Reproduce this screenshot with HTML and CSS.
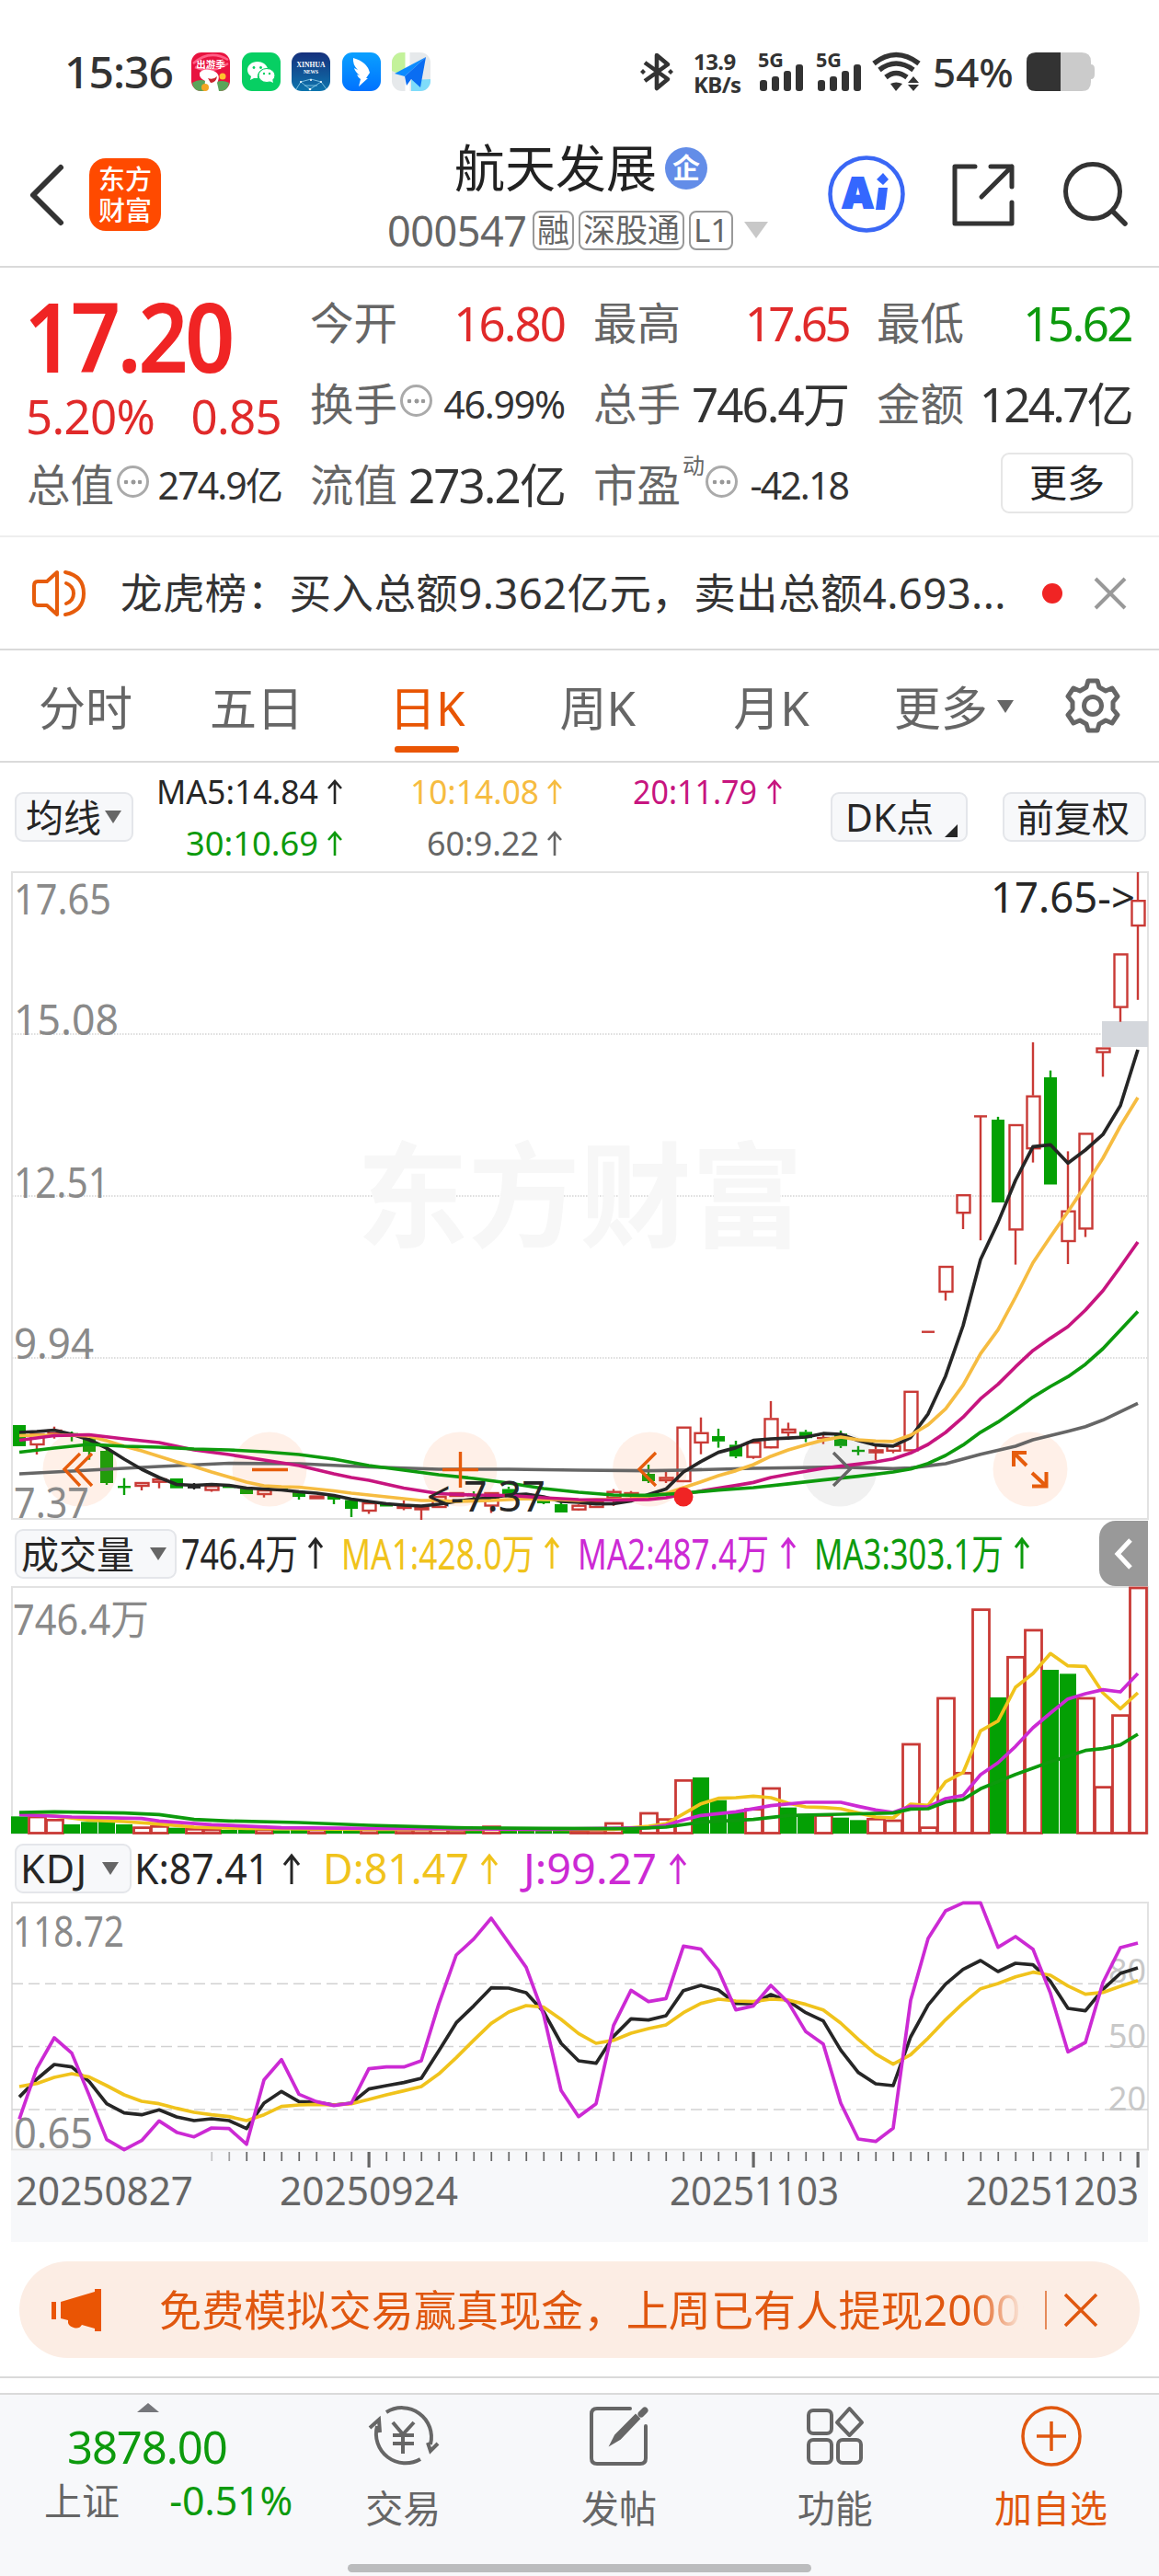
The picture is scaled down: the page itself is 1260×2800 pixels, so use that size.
FILE: index.html
```html
<!DOCTYPE html>
<html lang="zh-CN">
<head>
<meta charset="utf-8">
<title>航天发展 000547</title>
<link rel="stylesheet" href="styles.css">
</head>
<body>
<div class="status">
  <span class="clock">15:36</span>
  <div class="apps">
    <svg viewBox="0 0 42 42"><rect width="42" height="42" rx="11" fill="#e8123f"/><path d="M2 12Q20-4 40 8M4 16Q22 24 40 12" stroke="#ff5f86" stroke-width="2.5" fill="none"/><path d="M1 33Q12 26 21 35Q32 28 41 33Q40 42 31 42H11Q2 42 1 33Z" fill="#5aa55a"/><path d="M9 22Q14 16 24 20Q33 24 28 33L30 42H14L15 31Q8 28 9 22Z" fill="#fff"/><path d="M18 28Q24 30 28 26Q27 33 21 33Z" fill="#c8232c"/><circle cx="34" cy="26" r="3.5" fill="#ffc22e"/><circle cx="15" cy="38" r="4" fill="#f5a623"/><text x="21" y="17" text-anchor="middle" font-size="10.5" font-weight="700" fill="#fff">出游季</text></svg>
    <svg viewBox="0 0 42 42"><rect width="42" height="42" rx="11" fill="#07cf63"/><path d="M17 10C10.500 10 6 14 6 19c0 3 1.500 5 4 7l-1 4 4-2h4c-1-7 5-11 11-10.500C27 13 22 10 17 10Z" fill="#fff"/><ellipse cx="27" cy="25" rx="9" ry="7.500" fill="#fff" stroke="#07cf63" stroke-width="1"/><path d="M30 31l4 2-1-4Z" fill="#fff"/><g fill="#07cf63"><circle cx="13" cy="16.500" r="1.400"/><circle cx="20.500" cy="16.500" r="1.400"/><circle cx="24" cy="23" r="1.200"/><circle cx="30" cy="23" r="1.200"/></g></svg>
    <svg viewBox="0 0 42 42"><defs><linearGradient id="xh" x2="0" y2="1"><stop stop-color="#16307c"/><stop offset="1" stop-color="#0d75ae"/></linearGradient></defs><rect width="42" height="42" rx="11" fill="url(#xh)"/><g class="serif" fill="#fff" text-anchor="middle" font-weight="700"><text x="21" y="15.500" font-size="7.600">XINHUA</text><text x="21" y="23" font-size="5.500">NEWS</text></g><path d="M5 40L10 32L21 29L32 32L38 40M10 32L20 40L32 32M14 36L28 36" stroke="#8fd0ec" stroke-width=".8" fill="none"/><g fill="#fff"><circle cx="10" cy="32" r="1"/><circle cx="21" cy="30" r="1"/><circle cx="32" cy="32" r="1"/><circle cx="20" cy="40" r="1.300"/></g></svg>
    <svg viewBox="0 0 42 42"><defs><linearGradient id="dt" x2="0" y2="1"><stop stop-color="#0aa0ff"/><stop offset="1" stop-color="#0072ff"/></linearGradient></defs><rect width="42" height="42" rx="11" fill="url(#dt)"/><path d="M12 6Q27 10 30 22L26 28H28L18 37L20 29Q17 27 16 24L19 25Q14 21 13 17L17 19Q11 13 12 6Z" fill="#fff"/></svg>
    <svg viewBox="0 0 42 42"><defs><clipPath id="mp"><rect width="42" height="42" rx="11"/></clipPath></defs><g clip-path="url(#mp)"><path d="M0 0H42V42H0Z" fill="#e6e9eb"/><path d="M0 0H15V26L0 20Z" fill="#c3f29a"/><path d="M17 0V42" stroke="#fff" stroke-width="5"/><path d="M21 30L42 29V42H21Z" fill="#7fdcfa"/></g><path d="M37 5L3 23L14 26Z" fill="#0c8bff"/><path d="M37 5L14 26L16 36L21 29L31 38Z" fill="#0a6df2"/></svg>
  </div>
  <div class="sysicons">
    <svg class="bt" viewBox="0 0 36 42" fill="none" stroke="#333" stroke-width="4.600" stroke-linejoin="round"><path d="M5 11L30 29L18 39V3L30 13L5 31"/><path d="M3 18l3 3-3 3-3-3ZM33 18l3 3-3 3-3-3Z" fill="#333" stroke="none"/></svg>
    <div class="speed"><span>13.9</span><span>KB/s</span></div>
    <svg class="sig" viewBox="0 0 50 42" fill="#333"><text x="0" y="16" font-size="21" font-weight="700" textLength="28" lengthAdjust="spacingAndGlyphs">5G</text><rect x="2" y="30" width="8" height="12" rx="3"/><rect x="15" y="26" width="8" height="16" rx="3"/><rect x="28" y="20" width="8" height="22" rx="3"/><rect x="41" y="13" width="8" height="29" rx="3"/></svg>
    <svg class="sig sig2" viewBox="0 0 50 42" fill="#333"><text x="0" y="16" font-size="21" font-weight="700" textLength="28" lengthAdjust="spacingAndGlyphs">5G</text><rect x="2" y="30" width="8" height="12" rx="3"/><rect x="15" y="26" width="8" height="16" rx="3"/><rect x="28" y="20" width="8" height="22" rx="3"/><rect x="41" y="13" width="8" height="29" rx="3"/></svg>
    <svg class="wifi" viewBox="0 0 54 42"><g fill="none" stroke="#333" stroke-width="5.500"><path d="M2 12Q26-7 51 12"/><path d="M8 19Q26 5 45 19"/><path d="M15 27Q26 18 38 27"/></g><path d="M20 34Q26 31 33 34L26 42ZM39 33L45 26L51 33ZM39 35H51L45 42Z" fill="#333"/></svg>
    <span class="pct">54%</span>
    <svg class="bat" viewBox="0 0 74 42"><path d="M37 0H60Q70 0 70 10V13Q74 13 74 18V24Q74 29 70 29V32Q70 42 60 42H37Z" fill="#cbcbcb"/><path d="M10 0H37V42H10Q0 42 0 32V10Q0 0 10 0Z" fill="#333"/></svg>
  </div>
</div>

<header class="head">
  <svg class="back" viewBox="0 0 40 66"><path d="M35 3L5 33L35 63" fill="none" stroke="#333" stroke-width="6" stroke-linecap="round" stroke-linejoin="round"/></svg>
  <div class="logo"><span>东方</span><span>财富</span></div>
  <div class="title">
    <div class="name">航天发展<i class="qi">企</i></div>
    <div class="code"><span class="num">000547</span><b>融</b><b>深股通</b><b>L1</b><svg viewBox="0 0 26 18"><path d="M0 0H26L13 18Z" fill="#c8c8c8"/></svg></div>
  </div>
  <div class="actions">
    <svg class="ai" viewBox="0 0 84 84"><circle cx="42" cy="42" r="39.500" fill="none" stroke="#3a67f5" stroke-width="4.500"/><text x="16" y="57" font-size="46" font-weight="900" fill="#3467ff" stroke="#3467ff" stroke-width="2" textLength="33" lengthAdjust="spacingAndGlyphs">A</text><path d="M55 35H65L62 59H52ZM60 19L66 26L60 32L53 26Z" fill="#3467ff"/></svg>
    <svg class="share" viewBox="0 0 68 68"><path d="M25 3H3V65H65V42M42 3H65V25M65 3L32 36" fill="none" stroke="#333" stroke-width="5" stroke-linecap="round" stroke-linejoin="round"/></svg>
    <svg class="find" viewBox="0 0 70 70"><circle cx="32" cy="32" r="29.500" fill="none" stroke="#333" stroke-width="5"/><path d="M54 54L67 67" stroke="#333" stroke-width="5.500" stroke-linecap="round"/></svg>
  </div>
</header>

<section class="quote">
  <div class="pricebox"><div class="price">17.20</div><div class="chg"><span>5.20%</span><span>0.85</span></div></div>
  <div class="cell"><label>今开</label><em class="red">16.80</em></div>
  <div class="cell"><label>最高</label><em class="red tight">17.65</em></div>
  <div class="cell"><label>最低</label><em class="green">15.62</em></div>
  <div class="cell"><label>换手</label><i class="dots"></i><em class="sm">46.99%</em></div>
  <div class="cell"><label>总手</label><em>746.4万</em></div>
  <div class="cell"><label>金额</label><em class="amount">124.7亿</em></div>
  <div class="cell"><label>总值</label><i class="dots"></i><em class="sm cap">274.9亿</em></div>
  <div class="cell"><label>流值</label><em>273.2亿</em></div>
  <div class="cell"><label>市盈</label><sup>动</sup><i class="dots"></i><em class="sm cap">-42.18</em></div>
  <div class="cell morecell"><span class="more">更多</span></div>
</section>

<section class="news">
  <svg class="horn" viewBox="0 0 60 52" fill="none" stroke="#e65c0c" stroke-width="4" stroke-linecap="round" stroke-linejoin="round"><path d="M28 3V49L17 39H7Q3 39 3 34V18Q3 13 7 13H17Z"/><path d="M37 3Q57 7 57 26Q57 45 37 49M38 15Q46 18 46 26Q46 34 38 37"/></svg>
  <p>龙虎榜：买入总额9.362亿元，卖出总额4.693...</p>
  <span class="dot"></span>
  <svg class="x" viewBox="0 0 36 36"><path d="M2 2L34 34M34 2L2 34" stroke="#999" stroke-width="4"/></svg>
</section>

<nav class="tabs">
  <span>分时</span><span>五日</span><span class="on">日K</span><span>周K</span><span>月K</span>
  <span class="tmore">更多<svg viewBox="0 0 18 14"><path d="M0 0H18L9 14Z" fill="#666"/></svg></span>
  <svg class="gear" viewBox="0 0 60 60" fill="none" stroke="#666" stroke-width="5" stroke-linejoin="round"><path d="M25 3H35L37 10L44 14L51 11L57 20L52 26V34L57 40L51 49L44 46L37 50L35 57H25L23 50L16 46L9 49L3 40L8 34V26L3 20L9 11L16 14L23 10Z"/><circle cx="30" cy="30" r="9.500"/></svg>
</nav>

<section class="malegend">
  <span class="btn avg">均线<svg viewBox="0 0 18 14"><path d="M0 0H18L9 14Z" fill="#666"/></svg></span>
  <svg class="mas" viewBox="160 829 730 117" font-size="37">
    <text x="169" y="874" textLength="176" lengthAdjust="spacingAndGlyphs" fill="#262626">MA5:14.84</text>
    <text x="445" y="874" textLength="140" lengthAdjust="spacingAndGlyphs" fill="#f6bc41">10:14.08</text>
    <text x="687" y="874" textLength="135" lengthAdjust="spacingAndGlyphs" fill="#c7157f">20:11.79</text>
    <text x="201" y="930" textLength="144" lengthAdjust="spacingAndGlyphs" fill="#0d9a0d">30:10.69</text>
    <text x="463" y="930" textLength="122" lengthAdjust="spacingAndGlyphs" fill="#666">60:9.22</text>
    <g fill="none" stroke-width="2.600"><path d="M363 874V850M356 857L363 849L370 857" stroke="#262626"/><path d="M602 874V850M595 857L602 849L609 857" stroke="#f6bc41"/><path d="M841 874V850M834 857L841 849L848 857" stroke="#c7157f"/><path d="M363 930V906M356 913L363 905L370 913" stroke="#0d9a0d"/><path d="M602 930V906M595 913L602 905L609 913" stroke="#666"/></g>
  </svg>
  <span class="btn dk">DK点<svg viewBox="0 0 14 14"><path d="M14 0V14H0Z" fill="#262626"/></svg></span>
  <span class="btn fq">前复权</span>
</section>

<svg id="kline" class="panel" viewBox="0 946 1260 707" height="707"></svg>

<section class="sublegend">
  <span class="btn vol">成交量<svg viewBox="0 0 18 14"><path d="M0 0H18L9 14Z" fill="#666"/></svg></span>
  <svg class="subs" viewBox="192 1653 1000 71" font-size="45">
    <text x="197" y="1706" textLength="127" lengthAdjust="spacingAndGlyphs" fill="#262626">746.4万</text>
    <text x="371" y="1706" textLength="210" lengthAdjust="spacingAndGlyphs" fill="#f0c31c">MA1:428.0万</text>
    <text x="628" y="1706" textLength="208" lengthAdjust="spacingAndGlyphs" fill="#cc2ad4">MA2:487.4万</text>
    <text x="885" y="1706" textLength="206" lengthAdjust="spacingAndGlyphs" fill="#0d9a0d">MA3:303.1万</text>
    <g fill="none" stroke-width="3"><path d="M343 1705V1674M336 1682L343 1673L350 1682" stroke="#262626"/><path d="M600 1705V1674M593 1682L600 1673L607 1682" stroke="#f0c31c"/><path d="M857 1705V1674M850 1682L857 1673L864 1682" stroke="#cc2ad4"/><path d="M1111 1705V1674M1104 1682L1111 1673L1118 1682" stroke="#0d9a0d"/></g>
  </svg>
  <span class="fold"><svg viewBox="0 0 20 34"><path d="M17 2L3 17L17 32" fill="none" stroke="#fff" stroke-width="5"/></svg></span>
</section>

<svg id="volume" class="panel" viewBox="0 1724 1260 271" height="271"></svg>

<section class="sublegend kdj">
  <span class="btn kd">KDJ<svg viewBox="0 0 18 14"><path d="M0 0H18L9 14Z" fill="#666"/></svg></span>
  <svg class="subs" viewBox="143 1995 1049 72" font-size="45">
    <text x="146" y="2048" textLength="147" lengthAdjust="spacingAndGlyphs" fill="#262626">K:87.41</text>
    <text x="351" y="2048" textLength="159" lengthAdjust="spacingAndGlyphs" fill="#f0c31c">D:81.47</text>
    <text x="569" y="2048" textLength="145" lengthAdjust="spacingAndGlyphs" fill="#cc2ad4">J:99.27</text>
    <g fill="none" stroke-width="3"><path d="M317 2048V2018M309 2027L317 2017L325 2027" stroke="#262626"/><path d="M532 2048V2018M524 2027L532 2017L540 2027" stroke="#f0c31c"/><path d="M737 2048V2018M729 2027L737 2017L745 2027" stroke="#cc2ad4"/></g>
  </svg>
</section>

<svg id="kdj" class="panel" viewBox="0 2067 1260 370" height="370"></svg>

<section class="promo">
  <div class="pill">
    <svg class="mega" viewBox="0 0 54 46" fill="#ea5504"><path d="M0 14H5V33H0ZM10 14L47 3V0H54V46H47V43L33 39Q30 44 24 42Q17 40 18 34L10 32Z"/></svg>
    <p>免费模拟交易赢真现金，上周已有人提现2000元</p>
    <i class="bar"></i>
    <svg class="x" viewBox="0 0 38 38"><path d="M2 2L36 36M36 2L2 36" stroke="#e0570f" stroke-width="3.500"/></svg>
  </div>
</section>

<footer class="foot">
  <div class="index"><svg viewBox="0 0 24 10"><path d="M12 0L24 10H0Z" fill="#76777b"/></svg><strong>3878.00</strong><div><span>上证</span><em>-0.51%</em></div></div>
  <div class="item"><svg viewBox="0 0 76 70" fill="none" stroke="#666" stroke-width="4"><path d="M20 9A32 32 0 0 1 68 44M57 60A32 32 0 0 1 10 24M2 26L12 17L13 31M65 42L68 51L76 43"/><path d="M27 20L38 33L50 20M38 33V54M27 34H50M27 43H50"/></svg><span>交易</span></div>
  <div class="item"><svg viewBox="0 0 76 70" fill="none" stroke="#666" stroke-width="4" stroke-linecap="round"><path d="M50 5H14Q8 5 8 11V59Q8 65 14 65H61Q67 65 67 59V24"/><path d="M29 44L34 34L56 12L60 16L39 38Z" fill="#666" stroke-width="2"/><path d="M62 11L66 7" stroke-width="7"/></svg><span>发帖</span></div>
  <div class="item"><svg viewBox="0 0 76 70" fill="none" stroke="#666" stroke-width="4"><rect x="9" y="7" width="25" height="25" rx="5"/><rect x="9" y="39" width="25" height="25" rx="5"/><rect x="41" y="39" width="25" height="25" rx="5"/><path d="M53.500 5L67 20L53.500 34L40 20Z" stroke-linejoin="round"/></svg><span>功能</span></div>
  <div class="item add"><svg viewBox="0 0 76 70" fill="none" stroke="#e0570f" stroke-width="3.500"><circle cx="38" cy="35" r="31"/><path d="M22 35H54M38 19V51"/></svg><span>加自选</span></div>
  <i class="home"></i>
</footer>
<script src="chart.js"></script>
</body>
</html>
```
FILE: styles.css
```css
* { box-sizing: border-box; }
body { margin: 0; width: 1260px; background: #fff; color: #333; font-family: "Noto Sans", "Noto Sans CJK SC", sans-serif; line-height: 1; }
svg { display: block; flex: none; overflow: visible; }
svg text { font-family: "Noto Sans", "Noto Sans CJK SC", sans-serif; }
svg .serif text { font-family: "Liberation Serif", serif; }
i, em { font-style: normal; }
p { margin: 0; }
span, em, label, strong { white-space: nowrap; }

.status { height: 145px; padding: 57px 70px 0 70px; display: flex; align-items: flex-start; }
.clock { font-size: 48px; font-weight: 500; line-height: 42px; width: 138px; letter-spacing: -1px; }
.apps { display: flex; gap: 12.600px; }
.apps svg { width: 42px; height: 42px; }
.sysicons { display: flex; margin-left: auto; }
.bt { width: 36px; height: 42px; }
.speed { display: flex; flex-direction: column; width: 50px; margin: 0 20px 0 22px; font-size: 24px; font-weight: 700; line-height: 19px; gap: 6px; letter-spacing: -.6px; }
.sig { width: 50px; height: 42px; }
.sig2 { margin: 0 11px 0 13px; }
.wifi { width: 54px; height: 42px; }
.pct { font-size: 44px; font-weight: 500; line-height: 42px; width: 101px; margin-left: 12px; margin-right: 1px; }
.bat { width: 74px; height: 42px; }

.head { position: relative; height: 146px; border-bottom: 2px solid #dadada; display: flex; justify-content: space-between; padding: 0 34px 0 31px; }
.back { width: 40px; height: 66px; margin-top: 34px; }
.logo { width: 78px; height: 79px; margin: 27px 0 0 26px; border-radius: 18px; background: #ff4a00; color: #fff; font-size: 29px; font-weight: 500; line-height: 34px; display: flex; flex-direction: column; align-items: center; justify-content: center; }
.title { flex: 1; padding-left: 246px; }
.name { display: flex; margin-left: 73px; margin-top: 7px; font-size: 55px; line-height: 60px; color: #222; }
.qi { width: 46px; height: 46px; margin: 8px 0 0 9px; border-radius: 50%; background: #638de8; color: #fff; font-size: 30px; font-weight: 700; line-height: 44px; text-align: center; }
.code { display: flex; margin-top: 16px; color: #666; font-size: 45px; line-height: 46px; }
.code .num { width: 158px; letter-spacing: -.5px; }
.code b { font-weight: 400; border: 2px solid #999; border-radius: 8px; height: 43px; margin: 1px 5px 0 0; padding: 0 3px; font-size: 35px; line-height: 38px; }
.code svg { width: 26px; height: 18px; margin: 13px 0 0 7px; }
.actions { display: flex; margin-top: 24px; }
.ai { width: 84px; height: 84px; }
.share { width: 68px; height: 68px; margin: 9px 53px 0 51px; }
.find { width: 70px; height: 70px; margin-top: 7px; }

.quote { height: 293px; padding: 16px 30px 0; display: grid; grid-template-columns: repeat(4, 276px); grid-auto-rows: 88px; column-gap: 32px; border-bottom: 2px solid #eee; }
.pricebox { grid-row: span 2; color: #f02424; }
.price { font-size: 104px; font-weight: 600; line-height: 108px; padding-top: 4px; letter-spacing: -4px; transform: scaleX(.915); transform-origin: 0 0; margin-left: -4px; }
.chg { display: flex; justify-content: space-between; margin: 8px 0 0 -2px; font-size: 51px; line-height: 50px; color: #e02a2a; letter-spacing: -.700px; }
.cell { display: flex; align-items: center; color: #666; }
.cell label { font-size: 47.500px; margin-left: -1px; }
.cell em { margin-left: auto; font-size: 51px; letter-spacing: -1.900px; color: #333; }
.cell em.sm { font-size: 41px; letter-spacing: -1.200px; }
.cell em.cap { letter-spacing: -1.900px; }
.cell em.red { color: #e02a2a; }
.cell em.tight { letter-spacing: -3.600px; }
.cell em.amount { letter-spacing: -2.700px; }
.cell em.green { color: #0d9a0d; letter-spacing: -2.500px; }
.cell sup { align-self: flex-start; font-size: 24px; line-height: 24px; margin: 11px 0 0 2px; }
.cell sup + .dots { margin-left: 1px; }
.dots { width: 35px; height: 35px; border: 3px solid #aaa; border-radius: 50%; margin: -7px 0 0 3px; background: radial-gradient(circle at 50% 50%, #999 2.200px, transparent 2.800px) 50% 50% / 8px 8px no-repeat, radial-gradient(circle, #999 2px, transparent 2.600px) 3px 50% / 8px 8px no-repeat, radial-gradient(circle, #999 2px, transparent 2.600px) 18px 50% / 8px 8px no-repeat; }
.morecell { justify-content: flex-end; }
.more { width: 144px; height: 66px; margin: -4px -2px 0 0; border: 2px solid #e6e6e6; border-radius: 9px; color: #262626; font-size: 41px; line-height: 60px; text-align: center; }

.news { height: 123px; border-bottom: 2px solid #dadada; display: flex; align-items: center; padding-left: 34px; }
.horn { width: 60px; height: 52px; }
.news p { width: 964px; margin: -2px 0 0 37px; font-size: 45.500px; line-height: 60px; color: #333; white-space: nowrap; letter-spacing: .4px; }
.dot { width: 22px; height: 22px; border-radius: 50%; background: #f02424; margin-left: 38px; }
.news .x { width: 36px; height: 36px; margin-left: 34px; }

.tabs { height: 122px; border-bottom: 2px solid #dadada; display: flex; padding: 0 42px; font-size: 51px; line-height: 60px; color: #666; }
.tabs > span { margin-top: 32px; position: relative; }
.tabs span:nth-child(2) { margin-left: 84px; }
.tabs span:nth-child(3) { margin-left: 93px; }
.tabs span:nth-child(4) { margin-left: 103px; }
.tabs span:nth-child(5) { margin-left: 106px; }
.tabs .on { color: #e85503; }
.tabs .on::after { content: ""; position: absolute; left: 6px; top: 72px; width: 70px; height: 7px; border-radius: 3px; background: #ea5504; }
.tabs .tmore { display: flex; margin-left: 92px; }
.tmore svg { width: 18px; height: 14px; margin: 22px 0 0 10px; }
.gear { width: 60px; height: 60px; margin: 30px 0 0 auto; }

.btn { display: flex; align-items: center; height: 54px; border: 2px solid #e4e6ea; border-radius: 9px; background: #f7f8fa; color: #262626; font-size: 41px; line-height: 50px; flex: none; }
.btn svg { width: 18px; height: 14px; }
.malegend { height: 117px; display: flex; padding: 32px 0 0 16px; }
.mas { width: 730px; height: 117px; margin: -32px 12px 0 16px; }
.avg { width: 129px; padding-left: 10px; }
.avg svg { margin-left: 4px; }
.dk { width: 149px; padding-left: 14px; margin-right: 38px; }
.dk svg { width: 14px; height: 14px; margin: 30px 0 0 12px; }
.fq { width: 156px; padding-left: 13px; }
.panel { width: 1260px; }

.sublegend { height: 71px; display: flex; align-items: center; padding-left: 16px; }
.vol { width: 176px; padding-left: 5px; }
.vol svg { margin-left: 17px; }
.sublegend .subs { width: 1000px; height: 71px; }
.fold { width: 53px; height: 71px; margin-left: 3px; border-radius: 18px 0 0 18px; background: #999; padding: 19px 0 0 17px; }
.fold svg { width: 20px; height: 34px; }
.kdj { height: 72px; }
.kdj .subs { width: 1049px; height: 72px; }
.kd { width: 127px; padding-left: 4px; font-size: 43px; letter-spacing: 1.200px; }
.kd svg { margin-left: 16px; }

.promo { height: 148px; border-bottom: 2px solid #dadada; padding: 21px 21px 0; }
.pill { height: 105px; border-radius: 53px; background: #fcede4; display: flex; align-items: center; padding-left: 35px; color: #e0570f; }
.mega { width: 54px; height: 46px; }
.pill p { width: 944px; margin: -2px 0 0 63px; overflow: hidden; white-space: nowrap; font-size: 46px; line-height: 60px; letter-spacing: .15px; -webkit-mask-image: linear-gradient(90deg, #000 885px, transparent 940px); mask-image: linear-gradient(90deg, #000 885px, transparent 940px); }
.bar { width: 2px; height: 42px; background: #e58a5a; margin-left: 19px; }
.pill .x { width: 38px; height: 38px; margin-left: 18px; }

.foot { position: relative; height: 199px; margin-top: 16px; border-top: 2px solid #dadada; background: #f7f8fa; display: flex; }
.index { width: 330px; padding-left: 32px; display: flex; flex-direction: column; align-items: flex-start; color: #0d9a0d; }
.index svg { width: 24px; height: 10px; margin: 9px 0 0 117px; }
.index strong { font-weight: 400; font-size: 49px; line-height: 50px; margin: 12px 0 0 41px; letter-spacing: -1.100px; }
.index div { display: flex; width: 286px; justify-content: space-between; margin-top: 9px; padding-left: 16px; font-size: 43px; line-height: 50px; }
.index span { color: #666; font-size: 41px; }
.index em { letter-spacing: -.2px; }
.item { display: flex; flex-direction: column; align-items: center; width: 235px; padding-top: 10px; margin-left: -9px; color: #666; font-size: 41px; line-height: 50px; }
.item + .item { margin-left: 0; }
.item svg { width: 76px; height: 70px; }
.item span { margin-top: 18px; }
.add { color: #e0570f; }
.home { position: absolute; left: 378px; bottom: 4px; width: 504px; height: 9px; border-radius: 5px; background: #bbbcbd; }
```
FILE: chart.js
```js
const X0 = 21, STEP = 19, N = 65;
const cx = i => X0 + STEP * i;
const RED = '#c93a36', GREEN = '#04a004', GRID = '#e2e2e2';
const rect = (x, y, w, h, a) => `<rect x="${x}" y="${y}" width="${w}" height="${h}" ${a}/>`;
const line = (x1, y1, x2, y2, a) => `<path d="M${x1} ${y1}L${x2} ${y2}" ${a}/>`;
const poly = (pts, color, w = 3.7) => `<polyline points="${pts.map(p => p.join()).join(' ')}" fill="none" stroke="${color}" stroke-width="${w}" stroke-linejoin="round"/>`;
const label = (s, x, y, w, color = '#8a8a8a', size = 45) => `<text x="${x}" y="${y}" font-size="${size}" textLength="${w}" lengthAdjust="spacingAndGlyphs" fill="${color}">${s}</text>`;

// [up/down, body top, body bottom, high, low]
const candles = [
['g',1549,1572],['r',1558,1570,1558,1581],['r',1554,1558,1550.7,1563.7],['g',1557.7,1562,1556,1566.7],['g',1563,1578,1563,1586.7],
['g',1577,1612,1573,1614],['g',1616,1616,1606.7,1625],['r',1611,1615,1611,1620],['r',1607,1610.7,1605,1617.7],['g',1607,1617.7],
['k',1616.5,1616.5,1612,1619],['r',1614.5,1619.5,1614,1621.5],['g',1616,1616,1613,1616],['g',1616.7,1624],['r',1619,1624,1619,1627.7],
['g',1618,1620],['g',1620.7,1627,1620,1630],['r',1625.5,1628.5],['g',1625.5,1630,1625,1635],['g',1630.5,1640,1630,1649],
['r',1633,1642,1633,1645.5],['g',1634,1637.5],['r',1636,1639,1631,1641.5],['r',1637.5,1640.5,1637,1652],['r',1626,1638],
['r',1622,1626],['g',1625,1625,1621,1628],['r',1622,1636.5,1622,1644.5],['g',1618.5,1624,1616,1625],['g',1625,1628],
['g',1631,1634,1630,1635],['g',1635,1644,1632,1644],['r',1635.7,1640.7,1635,1642],['r',1631.4,1638],['r',1620.7,1627.9,1618.6,1636.8],
['r',1622,1624.3,1620.7,1628],['g',1602,1610,1592,1612],['r',1605.4,1609,1597,1612],['r',1550.7,1610],['r',1556.8,1567.9,1540.7,1580.7],
['g',1561,1566.8,1552.9,1573.6],['g',1570.4,1583.2,1566,1585],['r',1567,1583.6,1567,1585.7],['r',1541.4,1573.2,1522.9,1574.3],['r',1552.9,1557,1546.4,1561.4],
['g',1556.4,1563.2,1554.3,1567.5],['r',1562.9,1562.9,1558.9,1569.6],['g',1558.2,1571.8,1555,1573.9],['g',1576.8,1576.8,1571.8,1581.8],['r',1575.4,1578.6,1571.4,1587],
['r',1570.7,1576.8,1570.7,1579.6],['r',1511.8,1576.4],['r',1447.5,1447.5],['r',1376,1404,1376,1413.6],['r',1298.2,1318.2,1298.2,1336],
['r',1213.2,1213.2,1213.2,1348.2],['g',1217,1307,1213.9,1307],['r',1222,1336.4,1222,1374.6],['r',1190.7,1248.2,1132.9,1263.6],['g',1171,1287.5,1163.6,1287.5],
['r',1315.7,1349,1251.4,1374],['r',1231.4,1335.4,1231.4,1344.6],['r',1138.6,1143.6,1138.6,1170.4],['r',1036.4,1094.6,1036.4,1110.7],['r',978.2,1006,948,1086.8]];

// moving averages as [day, y]
const ma5 = [1557,1556,1554.5,1559,1565,1574,1586,1597,1606,1613.5,1614.5,1613.5,1614.5,1617.5,1618.5,1619.5,1621.5,1623,1625.5,1629.5,1632,1634.5,1636,1637,1635,1632,1629.5,1628,1625,1624,1627,1632,1633,1634.6,1634.3,1631.4,1624.5,1618.6,1600,1588.6,1578.6,1573.6,1565.7,1564,1563.2,1562,1558.2,1559,1565.7,1570.7,1571.8,1562.5,1536.8,1495.7,1441,1369,1328.6,1283,1246.4,1244.3,1264.3,1250,1233.2,1201.8,1141].map((y, i) => [i, y]);
const ma10 = [1560.5,1560,1560,1560,1561,1566,1572,1577,1583,1589,1594,1600,1605.5,1611,1615,1616,1616.5,1618.5,1620.5,1623,1625,1627,1629,1631,1631,1632,1631.5,1631,1630,1629,1630,1630,1631,1630,1630,1629,1626.5,1623.5,1617,1610.7,1604,1598.6,1592,1582.9,1576,1570.4,1565.4,1562,1565,1566.4,1566.8,1560,1548.6,1531.4,1505.7,1471.4,1445.4,1410,1372.5,1344.3,1317,1288.6,1259,1224,1193].map((y, i) => [i, y]);
const ma20 = [[0,1565.5],[2,1560.5],[4,1559.5],[6,1564],[8,1568],[10,1576],[12,1581],[14,1587],[16,1593],[18,1602],[19,1606],[20,1609],[22,1617.5],[24,1623.5],[26,1625],[28,1625.5],[30,1628],[32,1630],[34,1630.5],[36,1629.8],[37,1628],[38,1624],[39,1620.7],[40,1617.5],[41,1614.6],[42,1611.4],[43,1606],[44,1602.5],[45,1599.3],[46,1596],[47,1593.6],[48,1591.4],[49,1589],[50,1585.7],[51,1579.3],[52,1570],[53,1557],[54,1540.4],[55,1520.4],[56,1504.6],[57,1485.7],[58,1467.9],[59,1454.6],[60,1442],[61,1424],[62,1403],[63,1377],[64,1350]];
const ma30 = [[0,1578.5],[2,1574],[4,1570],[6,1572],[8,1573],[10,1575],[12,1576],[14,1578],[16,1581],[18,1586],[20,1593],[22,1598],[24,1603],[26,1607],[28,1612],[30,1618],[32,1622],[34,1625],[36,1625.4],[38,1623],[40,1619.6],[42,1617],[44,1612.9],[46,1608.6],[48,1604.6],[50,1600],[51,1596.8],[52,1590.7],[53,1582],[54,1570.7],[55,1556.8],[56,1545.7],[57,1532.5],[58,1518.6],[59,1507],[60,1496.4],[61,1482.9],[62,1466],[63,1445.7],[64,1425.4]];
const ma60 = [[0,1602],[4,1598],[8,1594],[12,1590.5],[16,1591],[20,1594.5],[24,1597],[28,1597],[32,1598],[36,1598.6],[38,1598],[42,1596],[47,1594.6],[50,1596.4],[51,1595.7],[53,1591],[55,1580.7],[57,1572],[58,1565],[60,1555.7],[61,1550.7],[62,1543.6],[64,1525.4]];
const days = a => a.map(([i, y]) => [cx(i), y]);

let k = rect(13, 948, 1235, 703, `fill="#fff" stroke="${GRID}" stroke-width="2"`);
for (const y of [1124, 1300, 1476]) k += line(13, y, 1248, y, 'stroke="#dedede" stroke-width="2" stroke-dasharray="1.5 1.5"');
k += '<text x="388" y="1346" font-size="124" font-weight="700" textLength="485" lengthAdjust="spacingAndGlyphs" fill="#f7f7f7">东方财富</text>';
k += rect(1198, 1110, 50, 28, 'fill="#d4d7dc"');
candles.forEach(([t, a, b, h = a, l = b], i) => {
  const x = cx(i), c = t === 'g' ? GREEN : t === 'k' ? '#262626' : RED;
  if (h < a) k += line(x, h, x, a, `stroke="${c}" stroke-width="2.4"`);
  if (l > b) k += line(x, b, x, l, `stroke="${c}" stroke-width="2.4"`);
  if (a === b) k += rect(x - 7, a - 1, 14, 2.4, `fill="${c}"`);
  else if (t === 'g') k += rect(x - 7, a, 14, b - a, `fill="${c}"`);
  else k += rect(x - 6.5, a + 1, 14, Math.max(b - a - 1, 1.5), `fill="#fff" stroke="${c}" stroke-width="2.4"`);
});
for (const [x, c] of [[87, '#fb8142'], [293, '#fb8142'], [500, '#fb8142'], [706.5, '#fb8142'], [913, '#888'], [1120, '#fb8142']]) k += `<circle cx="${x}" cy="1597" r="40.500" fill="${c}" opacity=".12"/>`;
k += poly(days(ma60), '#666') + poly(days(ma5), '#262626') + poly(days(ma10), '#f6bc41') + poly(days(ma20), '#c7157f') + poly(days(ma30), '#0d9a0d');
k += '<g fill="none" stroke="#e65c0c" stroke-width="3.4"><path d="M87 1580L70 1597L87 1615M100 1580L83 1597L100 1615M274 1597.500H313M481 1597.500H520M500.500 1578V1617M713 1579L695 1597L713 1615"/><path d="M906 1579L924 1597L906 1615" stroke="#666"/><path d="M1116 1579H1102V1594M1102 1579L1116 1593M1122 1615.500H1137.500V1600M1122 1601L1137 1615" stroke-width="4"/></g>';
k += '<circle cx="743" cy="1627" r="10.500" fill="#f02424"/>';
k += label('17.65', 15, 993.5, 106) + label('15.08', 15, 1125, 114) + label('12.51', 15, 1301.5, 104) + label('9.94', 15, 1477, 87) + label('7.37', 15, 1650, 82);
k += label('17.65-&gt;', 1077, 991.5, 157, '#262626', 46) + label('&lt;-7.37', 464, 1643, 129, '#262626', 46);
document.getElementById('kline').innerHTML = k;

// volume: offsets below the header row, in thirds of a pixel
const vy = v => 1640 + v / 3;
const vol = 'g1003 r1005 r1015 g1029 g1021 g1019 g1029 r1040 r1036 g1040 r1045 r1047 g1047 g1047 r1047 g1048 g1047 r1047 g1047 g1047 r1047 g1049 r1048 r1047 r1046 r1048 g1049 r1037 g1047 g1047 g1047 g1048 r1049 r1048 r1026 g1044 r993 r1013 r886 g876 g950 g990 r980 r912 g974 g995 r1000 g1007 g1015 r1012 r1017 r768 r1040 r618 r862 r329 g615 r484 r396 g525 g538 r618 r908 r674 r258'.split(' ');
const vma1 = [[0,995],[2,1002],[4,1015],[6,1020],[8,1028],[10,1038],[13,1042],[20,1045],[34,1045],[36,1035],[37,1027],[38,995],[39,962],[40,944],[41,942],[42,937],[43,942],[44,960],[45,972],[46,974],[47,978],[48,992],[49,1005],[50,1008],[51,963],[52,967],[53,890],[54,860],[55,724],[56,692],[57,582],[58,537],[59,472],[60,512],[61,514],[62,600],[63,652],[64,600]];
const vma2 = [[0,997],[3,1005],[7,1010],[8,1018],[11,1030],[15,1040],[20,1042],[30,1045],[36,1040],[37,1032],[38,1015],[39,1000],[41,988],[43,968],[45,957],[47,957],[48,970],[49,982],[50,990],[51,970],[52,972],[53,945],[54,935],[55,867],[56,828],[57,775],[58,714],[59,666],[60,620],[61,603],[62,590],[63,597],[64,537]];
const vma3 = [[0,990],[2,988],[6,992],[8,997],[10,1013],[12,1018],[16,1023],[20,1032],[25,1040],[30,1042],[35,1043],[37,1038],[39,1022],[42,1013],[44,1000],[47,996],[50,992],[51,979],[52,978],[53,956],[54,948],[55,913],[57,866],[59,825],[61,788],[62,782],[63,770],[64,735]];
const vp = a => a.map(([i, v]) => [cx(i), vy(v)]);
let v = rect(13, 1725, 1235, 268, `fill="#fff" stroke="${GRID}" stroke-width="2"`);
vol.forEach((s, i) => {
  const y = vy(+s.slice(1)), x = cx(i);
  v += s[0] === 'g' ? rect(x - 9, y, 18, 1993 - y, `fill="${GREEN}"`) : rect(x - 8.5, y, 18, 1992.5 - y, `fill="#fff" stroke="${RED}" stroke-width="2.8"`);
});
v += poly(vp(vma1), '#f0c31c') + poly(vp(vma2), '#cc2ad4') + poly(vp(vma3), '#0d9a0d') + label('746.4万', 14, 1777, 148);
document.getElementById('volume').innerHTML = v;

const K = [718,660,612,620,668,740,770,776,760,783,795,789,795,821,738,700,733,735,744,738,692,681,671,657,568,476,421,362,363,378,440,543,600,608,520,463,467,453,371,354,369,413,414,384,405,443,470,565,638,675,681,522,418,350,302,273,309,282,287,341,429,437,367,315,297];
const D = [684,674,654,642,653,681,711,732,740,755,768,776,782,795,776,749,744,742,744,740,726,711,698,684,643,590,533,478,441,420,425,465,511,543,533,510,495,483,443,413,399,405,407,399,402,416,434,477,530,578,611,580,526,466,412,365,348,326,311,321,356,383,377,357,338];
const J = [790,625,525,575,713,857,890,860,796,833,848,819,821,872,662,596,709,733,746,738,626,620,620,600,415,255,203,135,215,295,450,697,782,740,485,370,407,397,226,236,305,434,421,354,410,505,545,738,855,863,820,403,201,111,85,85,230,195,236,380,571,540,345,231,216];
const kp = a => a.map((t, i) => [cx(i), 2040 + t / 3]);
let q = rect(12, 2338, 1236, 99, 'fill="#f7f8fa"') + rect(13, 2068, 1235, 268.5, `fill="#fff" stroke="${GRID}" stroke-width="2"`);
for (const y of [2156.3, 2224.5, 2293]) q += line(13, y, 1248, y, 'stroke="#d2d2d2" stroke-width="1.6" stroke-dasharray="12 6"');
q += label('80', 1205, 2155, 41, '#c8c8c8', 37) + label('50', 1205, 2226, 41, '#c8c8c8', 37) + label('20', 1205, 2294, 41, '#c8c8c8', 37);
q += label('118.72', 14, 2116, 121) + label('0.65', 15, 2335, 86);
q += poly(kp(K), '#262626') + poly(kp(D), '#f0c31c') + poly(kp(J), '#cc2ad4');
for (let i = 11; i < N; i++) {
  const big = i === 20 || i === 42 || i === 64;
  q += rect(cx(i) - (big ? 1.5 : .6), 2339, big ? 3.2 : 1.7, big ? 17 : 10, `fill="#666" opacity="${i === 11 ? .35 : i === 12 ? .6 : 1}"`);
}
q += label('20250827', 17, 2397, 193, '#666', 44) + label('20250924', 304, 2397, 194, '#666', 44) + label('20251103', 728, 2397, 184, '#666', 44) + label('20251203', 1050, 2397, 188, '#666', 44);
document.getElementById('kdj').innerHTML = q;
```
